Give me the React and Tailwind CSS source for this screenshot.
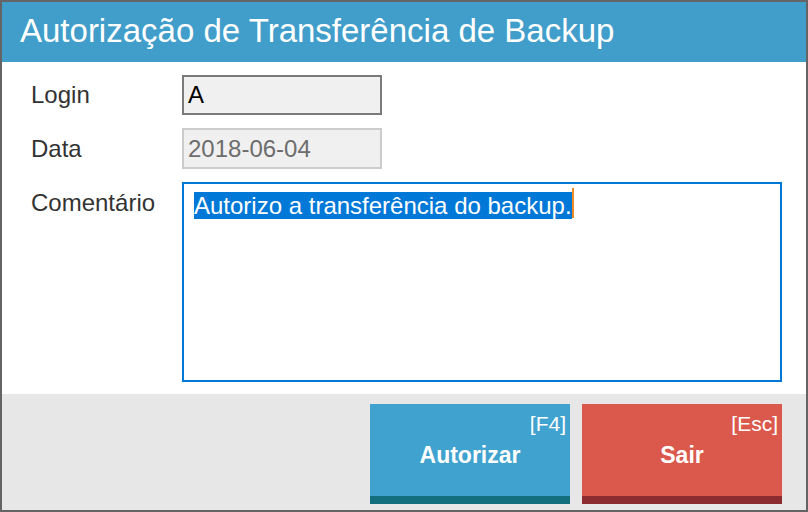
import React from "react";

const font = { fontFamily: '"Liberation Sans", Arial, sans-serif' };

const ActionButton = ({ label, shortcut, bg, stripe }) => {
  return (
    <button className={`relative flex h-[100px] w-[200px] flex-col text-white ${bg}`}>
      <span className="absolute right-[4px] top-[8px] text-[21px] leading-[24px]">{shortcut}</span>
      <span className="flex flex-1 items-center justify-center pt-[10px] text-[23px] font-bold">{label}</span>
      <span className={`h-[8px] w-full ${stripe}`}></span>
    </button>
  );
};

export default function App() {
  return (
    <div className="flex h-[512px] w-[808px] flex-col border-2 border-[#646464] bg-white" style={font}>
      {/* header */}
      <div className="flex h-[60px] items-center bg-[#419ecb] pl-[18px] pb-[4px]">
        <h1 className="text-[33px] leading-none text-white">Autorização de Transferência de Backup</h1>
      </div>

      {/* form */}
      <div className="flex h-[332px] flex-col gap-[13px] py-[13px] pl-[29px] text-[24px] text-[#333333]">
        <div className="flex items-center">
          <span className="w-[151px]">Login</span>
          <div className="flex h-[40px] w-[200px] items-center border-2 border-[#7a7a7a] bg-[#f0f0f0] pl-[4px] text-black">
            A
          </div>
        </div>
        <div className="flex items-center">
          <span className="w-[151px]">Data</span>
          <div className="flex h-[41px] w-[200px] items-center border-2 border-[#cccccc] bg-[#f0f0f0] pl-[4px] text-[#6d6d6d]">
            2018-06-04
          </div>
        </div>
        <div className="flex items-start">
          <span className="w-[151px] pt-[6px] leading-[30px]">Comentário</span>
          <div className="h-[200px] w-[600px] border-2 border-[#0078d7] pl-[10px] pt-[4px]">
            <span className="bg-[#0078d7] leading-[30px] text-white">Autorizo a transferência do backup.</span>
            <span className="inline-block h-[30px] w-[2px] bg-[#f08a24] align-top"></span>
          </div>
        </div>
      </div>

      {/* footer */}
      <div className="flex flex-1 justify-end gap-[12px] bg-[#e6e7e6] pr-[24px] pt-[10px]">
        <ActionButton label="Autorizar" shortcut="[F4]" bg="bg-[#3fa2cf]" stripe="bg-[#136f7d]" />
        <ActionButton label="Sair" shortcut="[Esc]" bg="bg-[#db594c]" stripe="bg-[#8c2b30]" />
      </div>
    </div>
  );
}
